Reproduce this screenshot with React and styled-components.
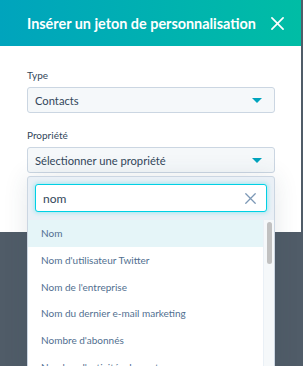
import React from "react";
import styled, { createGlobalStyle } from "styled-components";

const GlobalStyle = createGlobalStyle`
  html, body {
    margin: 0;
    padding: 0;
    background: #505c68;
    font-family: Lato, "Open Sans", sans-serif;
  }
`;

const Page = styled.div`
  width: 303px;
  height: 366px;
  overflow: hidden;
  background: #505c68;
`;

const Modal = styled.div`
  position: relative;
  width: 301px;
  height: 232px;
  background: #ffffff;
`;

const Header = styled.div`
  height: 46px;
  display: flex;
  align-items: center;
  justify-content: space-between;
  padding: 0 17px 0 27px;
  background: linear-gradient(90deg, #00a4bd 0%, #00bda5 100%);
`;

const Title = styled.h1`
  margin: 0;
  font-size: 14.4px;
  font-weight: 700;
  color: #ffffff;
`;

const CloseButton = styled.button`
  border: none;
  background: none;
  padding: 0;
  width: 13px;
  height: 13px;
  display: flex;
`;

const Body = styled.div`
  padding: 22px 27px 0 27px;
  width: 248px;
`;

const Label = styled.div`
  font-size: 10px;
  line-height: 14px;
  color: #33475b;
  margin: ${(p) => p.$top || 0}px 0 5px 0;
`;

const Select = styled.div`
  box-sizing: border-box;
  height: 26px;
  display: flex;
  align-items: center;
  justify-content: space-between;
  padding: 0 12px 0 7px;
  background: #f5f8fa;
  border: 1px solid #cbd6e2;
  border-radius: 3px;
  font-size: 11.2px;
  color: #33475b;
`;

const Caret = styled.span`
  width: 0;
  height: 0;
  border-left: 5px solid transparent;
  border-right: 5px solid transparent;
  border-top: 5px solid #00a4bd;
`;

const SelectWrap = styled.div`
  position: relative;
`;

const Dropdown = styled.div`
  position: absolute;
  top: 29px;
  left: 0;
  width: 248px;
  box-sizing: border-box;
  background: #eaf0f6;
  border: 1px solid #cbd6e2;
  border-radius: 3px;
  box-shadow: 0 1px 24px rgba(45, 62, 80, 0.12);
  z-index: 2;
`;

const SearchBox = styled.div`
  margin: 7px 7px 8px 7px;
  box-sizing: border-box;
  height: 28px;
  display: flex;
  align-items: center;
  justify-content: space-between;
  padding: 0 10px 0 7px;
  background: #ffffff;
  border: 1.5px solid #00d0e4;
  border-radius: 3px;
  box-shadow: 0 0 4px 1px rgba(0, 208, 228, 0.3);
  font-size: 12px;
  color: #33475b;
`;

const ListArea = styled.div`
  display: flex;
  background: #ffffff;
  height: 160px;
`;

const List = styled.ul`
  flex: 1;
  margin: 0;
  padding: 0;
  list-style: none;
`;

const Item = styled.li`
  height: 26.7px;
  display: flex;
  align-items: center;
  padding-left: 13px;
  font-size: 10px;
  color: #516f90;
  background: ${(p) => (p.$active ? "#e5f5f8" : "#ffffff")};
`;

const Track = styled.div`
  width: 10px;
  background: #f5f8fa;
  border-left: 1px solid #eaf0f6;
  display: flex;
  justify-content: center;
  padding-top: 2px;
`;

const Thumb = styled.div`
  width: 5px;
  height: 42px;
  border-radius: 3px;
  background: #c1c1c1;
`;

const items = [
  "Nom",
  "Nom d'utilisateur Twitter",
  "Nom de l'entreprise",
  "Nom du dernier e-mail marketing",
  "Nombre d'abonnés",
  "Nombre d'activités de vente",
];

const XIcon = ({ color, size, stroke }) => (
  <svg width={size} height={size} viewBox="0 0 14 14">
    <path
      d="M1 1 L13 13 M13 1 L1 13"
      stroke={color}
      strokeWidth={stroke}
      strokeLinecap="round"
    />
  </svg>
);

export default function App() {
  return (
    <Page>
      <GlobalStyle />
      <Modal>
        <Header>
          <Title>Insérer un jeton de personnalisation</Title>
          <CloseButton>
            <XIcon color="#ffffff" size={13} stroke={1.8} />
          </CloseButton>
        </Header>
        <Body>
          <Label>Type</Label>
          <Select>
            Contacts
            <Caret />
          </Select>
          <Label $top={15}>Propriété</Label>
          <SelectWrap>
            <Select>
              Sélectionner une propriété
              <Caret />
            </Select>
            <Dropdown>
              <SearchBox>
                nom
                <XIcon color="#7c98b6" size={11} stroke={1.6} />
              </SearchBox>
              <ListArea>
                <List>
                  {items.map((it, i) => (
                    <Item key={it} $active={i === 0}>
                      {it}
                    </Item>
                  ))}
                </List>
                <Track>
                  <Thumb />
                </Track>
              </ListArea>
            </Dropdown>
          </SelectWrap>
        </Body>
      </Modal>
    </Page>
  );
}
